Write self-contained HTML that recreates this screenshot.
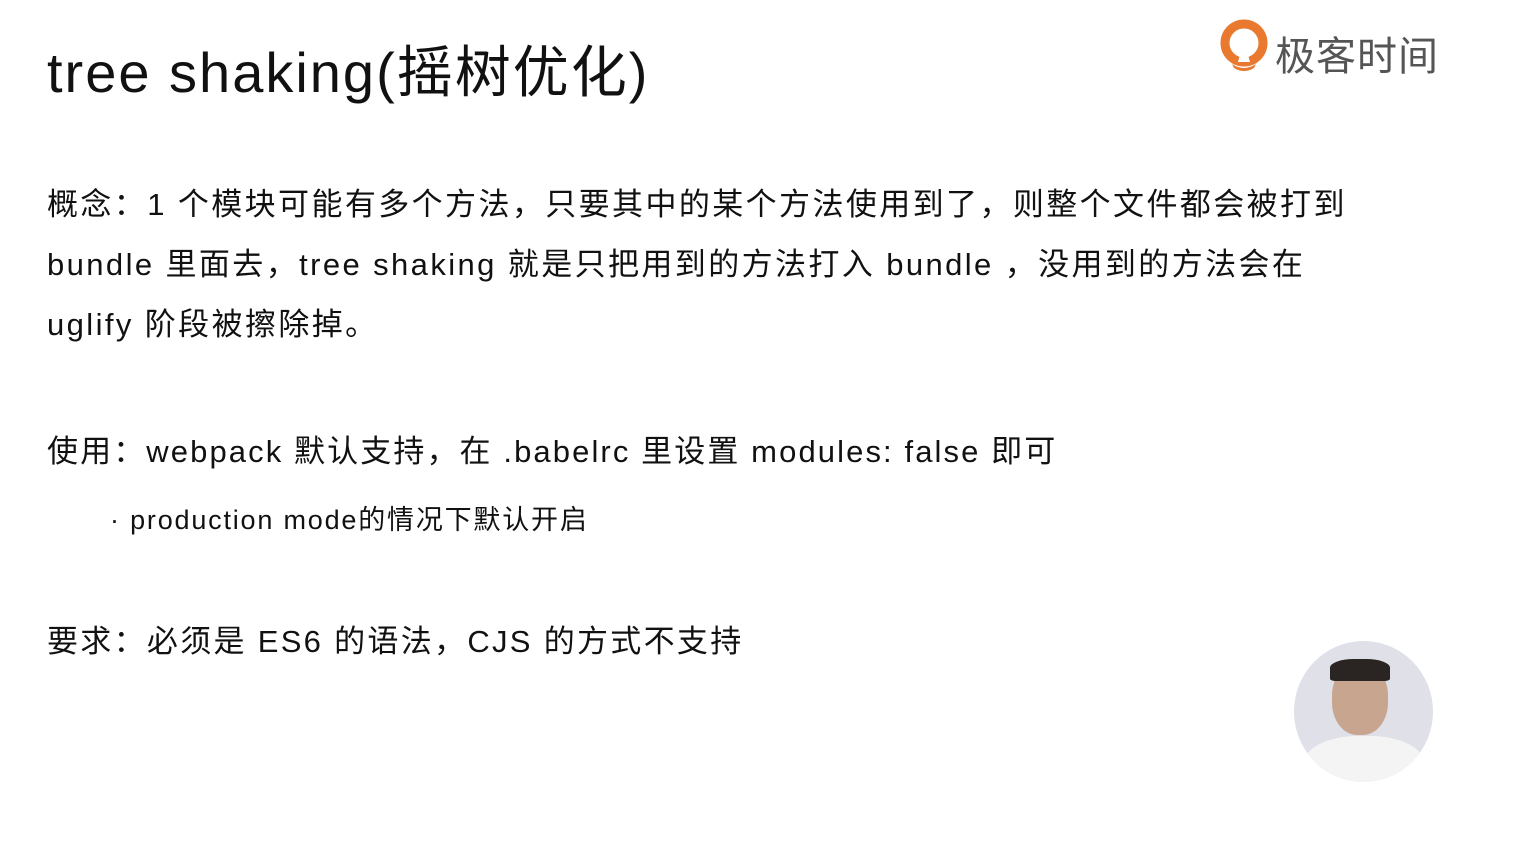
<!DOCTYPE html>
<html><head><meta charset="utf-8"><style>
body{margin:0;width:1514px;height:846px;background:#fff;position:relative;overflow:hidden;font-family:"Liberation Sans","Noto Sans CJK SC",sans-serif;color:#111}
.t{position:absolute;left:47px;white-space:nowrap}
</style></head><body>
<div class="t" style="top:28px;font-size:56px;letter-spacing:2px">tree shaking(摇树优化)</div>
<div class="t" style="top:175px;font-size:31px;line-height:60px;letter-spacing:2.4px">概念：1 个模块可能有多个方法，只要其中的某个方法使用到了，则整个文件都会被打到<br>bundle 里面去，tree shaking 就是只把用到的方法打入 bundle ，没用到的方法会在<br>uglify 阶段被擦除掉。</div>
<div class="t" style="top:432px;font-size:31px;line-height:40px;letter-spacing:2.1px">使用：webpack 默认支持，在 .babelrc 里设置 modules: false 即可</div>
<div class="t" style="top:502px;left:110px;font-size:27px;line-height:36px;letter-spacing:1.8px">· production mode的情况下默认开启</div>
<div class="t" style="top:622px;font-size:31px;line-height:40px;letter-spacing:2.3px">要求：必须是 ES6 的语法，CJS 的方式不支持</div>
<svg style="position:absolute;left:1220px;top:18px" width="50" height="56" viewBox="0 0 50 56">
<circle cx="24" cy="25" r="19" fill="none" stroke="#e8792f" stroke-width="9"/>
<path d="M24 22 L18 44 L30 44 Z" fill="#fff"/>
<path d="M12 46 Q24 54 36 46 L34 50 Q24 56 14 50Z" fill="#e8792f"/>
</svg>
<div class="t" style="left:1275px;top:24px;font-size:40px;color:#555;letter-spacing:1px">极客时间</div>
<div style="position:absolute;left:1294px;top:641px;width:139px;height:141px;border-radius:50%;background:#dfe0e8;overflow:hidden">
<div style="position:absolute;left:38px;top:22px;width:56px;height:72px;border-radius:45%;background:#c8a58e"></div>
<div style="position:absolute;left:36px;top:18px;width:60px;height:22px;border-radius:40% 40% 10% 10%;background:#2a2422"></div>
<div style="position:absolute;left:10px;top:95px;width:120px;height:60px;border-radius:45% 45% 0 0;background:#f4f4f4"></div>
</div>
</body></html>
